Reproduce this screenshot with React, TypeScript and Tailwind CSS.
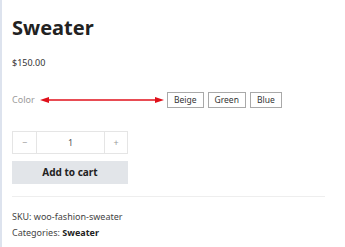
import React from 'react';

const App: React.FC = () => {
  const colors = ['Beige', 'Green', 'Blue'];

  return (
    <div className="w-[345px] h-[247px] bg-white border-l-2 border-[#dde3ee] overflow-hidden" style={{ fontFamily: '"Noto Sans", sans-serif' }}>
      <div className="pl-[10px] pr-[20px] pt-[15px]">
        <h1 className="text-[20px] leading-[26px] font-bold text-[#222]">Sweater</h1>
        <p className="mt-[16px] text-[9px] leading-[12px] text-[#333]">$150.00</p>

        {/* variation row */}
        <div className="mt-[23px] flex items-center h-[16px]">
          <span className="text-[9px] text-[#9a9a9a] w-[28px]">Color</span>
          <svg width="124" height="8" viewBox="0 0 124 8">
            <line x1="4" y1="4" x2="120" y2="4" stroke="#e0101a" strokeWidth="1.6" />
            <polygon points="0,4 9,1 9,7" fill="#e0101a" />
            <polygon points="124,4 115,1 115,7" fill="#e0101a" />
          </svg>
          <div className="ml-[3px] flex gap-[4px]">
            {colors.map((c) => (
              <span
                key={c}
                className="h-[16px] px-[6px] border border-[#a9a9a9] text-[8.5px] leading-[14px] text-[#333] flex items-center"
              >
                {c}
              </span>
            ))}
          </div>
        </div>

        {/* quantity */}
        <div className="mt-[23px] w-[116px] h-[23px] border border-[#e5e5e5] flex text-[9px] text-[#555]">
          <span className="w-[24px] flex items-center justify-center border-r border-[#e5e5e5] text-[#999]">−</span>
          <span className="flex-1 flex items-center justify-center">1</span>
          <span className="w-[23px] flex items-center justify-center border-l border-[#e5e5e5] text-[#999]">+</span>
        </div>
        <button className="mt-[7px] w-[116px] h-[23px] bg-[#e2e5e9] text-[10px] font-bold text-[#222]">Add to cart</button>

        <div className="mt-[12px] w-[313px] border-t border-[#eeeeee]" />

        <p className="mt-[12px] text-[9px] leading-[16px] text-[#444]">SKU: woo-fashion-sweater</p>
        <p className="text-[9px] leading-[16px] text-[#444]">
          Categories: <span className="font-bold text-[#222]">Sweater</span>
        </p>
      </div>
    </div>
  );
};

export default App;
